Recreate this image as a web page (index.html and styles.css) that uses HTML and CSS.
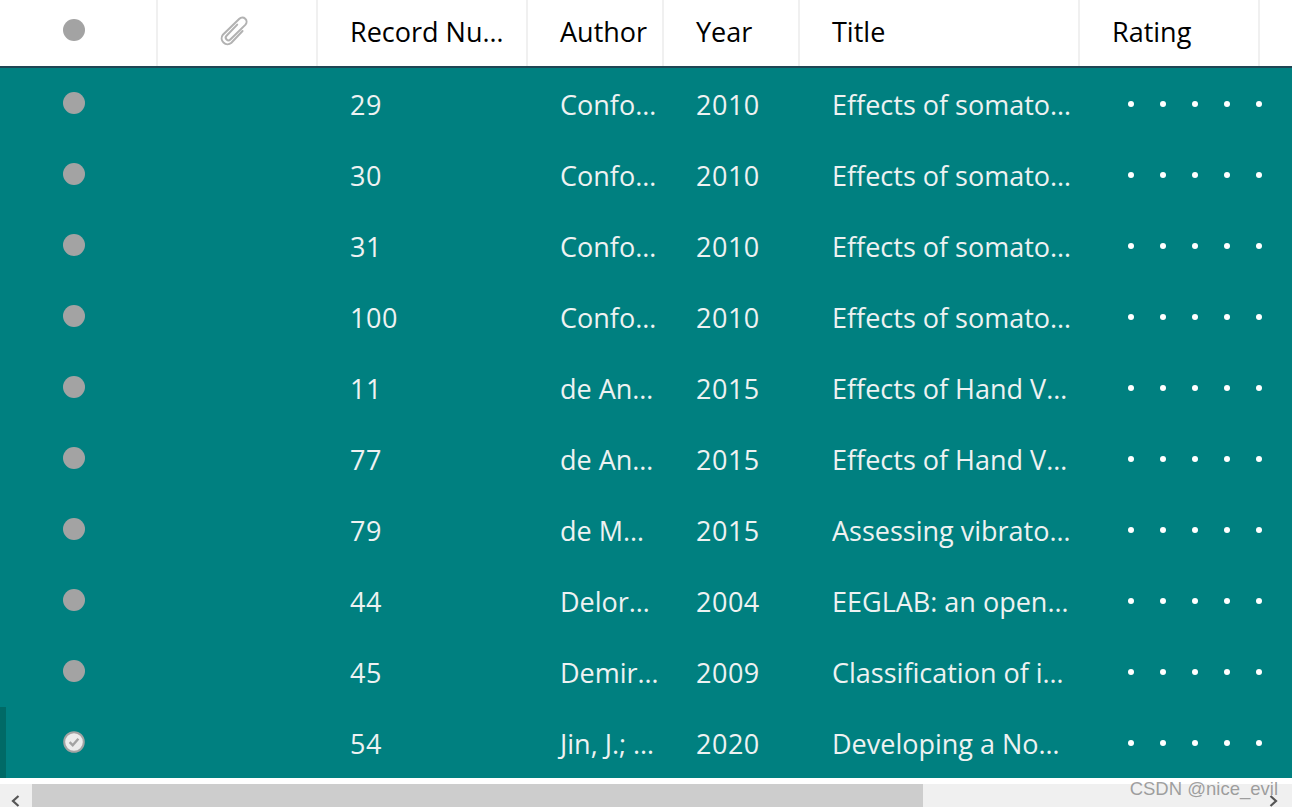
FILE: index.html
```html
<!DOCTYPE html>
<html lang="en">
<head>
<meta charset="utf-8">
<title>Library</title>
<link rel="stylesheet" href="styles.css">
</head>
<body>
<main class="table">
  <div class="row head">
    <div class="cell icon"><span class="dot"></span></div>
    <div class="cell icon2"><svg class="clip" width="40" height="40" viewBox="0 0 40 40" fill="none" stroke="#b2b2b2" stroke-width="1.9" stroke-linecap="round"><path d="M29 20 18.500 31a5.500 5.500 0 0 1-8-7.500L26 8.500a4 4 0 0 1 5.800 5.500L17.500 28a2.500 2.500 0 0 1-3.600-3.500L24 14"/></svg></div>
    <div class="cell text">Record Nu…</div>
    <div class="cell text">Author</div>
    <div class="cell text">Year</div>
    <div class="cell text">Title</div>
    <div class="cell text">Rating</div>
    <div class="cell last"></div>
  </div>
  <div class="row"><div class="cell icon"><span class="dot"></span></div><div class="cell"></div><div class="cell text">29</div><div class="cell text">Confo…</div><div class="cell text">2010</div><div class="cell text">Effects of somato…</div><div class="cell stars"><i></i><i></i><i></i><i></i><i></i></div></div>
  <div class="row"><div class="cell icon"><span class="dot"></span></div><div class="cell"></div><div class="cell text">30</div><div class="cell text">Confo…</div><div class="cell text">2010</div><div class="cell text">Effects of somato…</div><div class="cell stars"><i></i><i></i><i></i><i></i><i></i></div></div>
  <div class="row"><div class="cell icon"><span class="dot"></span></div><div class="cell"></div><div class="cell text">31</div><div class="cell text">Confo…</div><div class="cell text">2010</div><div class="cell text">Effects of somato…</div><div class="cell stars"><i></i><i></i><i></i><i></i><i></i></div></div>
  <div class="row"><div class="cell icon"><span class="dot"></span></div><div class="cell"></div><div class="cell text">100</div><div class="cell text">Confo…</div><div class="cell text">2010</div><div class="cell text">Effects of somato…</div><div class="cell stars"><i></i><i></i><i></i><i></i><i></i></div></div>
  <div class="row"><div class="cell icon"><span class="dot"></span></div><div class="cell"></div><div class="cell text">11</div><div class="cell text">de An…</div><div class="cell text">2015</div><div class="cell text">Effects of Hand V…</div><div class="cell stars"><i></i><i></i><i></i><i></i><i></i></div></div>
  <div class="row"><div class="cell icon"><span class="dot"></span></div><div class="cell"></div><div class="cell text">77</div><div class="cell text">de An…</div><div class="cell text">2015</div><div class="cell text">Effects of Hand V…</div><div class="cell stars"><i></i><i></i><i></i><i></i><i></i></div></div>
  <div class="row"><div class="cell icon"><span class="dot"></span></div><div class="cell"></div><div class="cell text">79</div><div class="cell text">de M…</div><div class="cell text">2015</div><div class="cell text">Assessing vibrato…</div><div class="cell stars"><i></i><i></i><i></i><i></i><i></i></div></div>
  <div class="row"><div class="cell icon"><span class="dot"></span></div><div class="cell"></div><div class="cell text">44</div><div class="cell text">Delor…</div><div class="cell text">2004</div><div class="cell text">EEGLAB: an open…</div><div class="cell stars"><i></i><i></i><i></i><i></i><i></i></div></div>
  <div class="row"><div class="cell icon"><span class="dot"></span></div><div class="cell"></div><div class="cell text">45</div><div class="cell text">Demir…</div><div class="cell text">2009</div><div class="cell text">Classification of i…</div><div class="cell stars"><i></i><i></i><i></i><i></i><i></i></div></div>
  <div class="row current"><div class="cell icon"><svg class="check" width="22" height="22" viewBox="0 0 22 22"><circle cx="11" cy="11" r="9.8" fill="#ececec" stroke="#a3a3a3" stroke-width="2"/><path d="M6.6 11.2 9.7 14.2 15.4 7.8" fill="none" stroke="#a3a3a3" stroke-width="2.4"/></svg></div><div class="cell"></div><div class="cell text">54</div><div class="cell text">Jin, J.; …</div><div class="cell text">2020</div><div class="cell text">Developing a No…</div><div class="cell stars"><i></i><i></i><i></i><i></i><i></i></div></div>
</main>
<div class="scrollbar">
  <div class="arrow"><svg width="12" height="12" viewBox="0 0 12 12" fill="none" stroke="#555" stroke-width="2.2"><path d="M9.500 1 4 6l5.500 5"/></svg></div>
  <div class="thumb"></div>
  <div class="arrow"><svg width="12" height="12" viewBox="0 0 12 12" fill="none" stroke="#555" stroke-width="2.2"><path d="M2.500 1 8 6l-5.500 5"/></svg></div>
</div>
<div class="watermark">CSDN @nice_evil</div>
</body>
</html>
```
FILE: styles.css
```css
html, body {
  margin: 0;
  height: 807px;
  overflow: hidden;
  background: #fff;
  font-family: "Open Sans", "Noto Sans", sans-serif;
}
.table { display: flex; flex-direction: column; height: 778px; background: #008080; }
.row {
  display: grid;
  grid-template-columns: 158px 160px 210px 136px 136px 280px 180px 32px;
  height: 71px;
  color: #eef2f2;
  font-size: 27px;
  position: relative;
}
.row.head {
  height: 66px;
  flex: none;
  background: #fff;
  color: #000;
  border-bottom: 2px solid #1f4654;
}
.head .cell { border-right: 2px solid #f0f0f0; box-sizing: border-box; }
.head .last { border-right: 0; }
.cell { display: flex; align-items: center; justify-content: center; min-width: 0; white-space: nowrap; overflow: hidden; }
.cell.icon { justify-content: flex-start; padding-left: 63px; }
.cell.text { justify-content: flex-start; padding-left: 32px; padding-top: 2px; }
.row:not(.head) .cell:nth-child(3), .row:not(.head) .cell:nth-child(5) { letter-spacing: 0.5px; }
.head .cell.text { padding-top: 0; padding-bottom: 4px; }
.dot { width: 22px; height: 22px; border-radius: 50%; background: #a3a3a3; margin-top: -2px; flex: none; }
.head .dot { margin-top: -6px; }
.clip { margin-top: -4px; margin-left: -9px; transform: scale(1.06); }
.check { margin-top: -2px; flex: none; }
.cell.stars { justify-content: flex-start; gap: 26px; padding-left: 48px; overflow: visible; }
.stars i { width: 6px; height: 6px; border-radius: 50%; background: #fff; flex: none; }
.row.current::before {
  content: "";
  position: absolute;
  left: 0;
  top: 0;
  bottom: 0;
  width: 6px;
  background: #006a66;
}
.scrollbar { display: flex; height: 23px; margin-top: 6px; background: #f0f0f0; }
.arrow { width: 32px; display: flex; align-items: flex-end; justify-content: center; flex: none; height: 23px; overflow: hidden; }
.arrow:last-child { margin-left: auto; justify-content: flex-end; padding-right: 9px; box-sizing: border-box; }
.arrow svg { margin-right: 3px; }
.thumb { width: 891px; background: #cdcdcd; flex: none; }
.watermark {
  position: absolute;
  right: 14px;
  top: 778px;
  font-family: "Liberation Sans", sans-serif;
  font-size: 18.5px;
  color: rgba(130, 130, 130, 0.75);
}
```
